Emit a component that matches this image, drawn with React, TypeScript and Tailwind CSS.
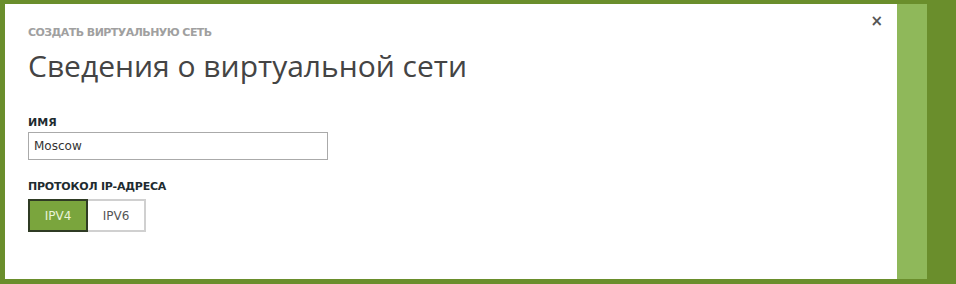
import React from "react";

export default function App() {
  return (
    <div className="w-[956px] h-[284px] bg-[#6a8e2c] flex pt-[4px] pl-[5px] pb-[5px] overflow-hidden">
      <div className="relative w-[892px] h-full bg-white pl-[23px] pt-[21px] font-['DejaVu_Sans',sans-serif]">
        {/* close */}
        <button className="absolute right-[14px] top-[10px] text-[15px] leading-none font-bold text-[#555]">
          ×
        </button>

        <div className="text-[11px] leading-[16px] font-bold text-[#a0a0a0] uppercase tracking-[-0.55px]">
          Создать виртуальную сеть
        </div>
        <h1 className="mt-[7px] text-[30px] leading-[36px] text-[#444] font-['Open_Sans',sans-serif]">
          Сведения о виртуальной сети
        </h1>

        <div className="mt-[32px] text-[11px] leading-[14px] font-bold text-[#1e2b30] uppercase">
          Имя
        </div>
        <div className="mt-[2px] w-[300px] h-[28px] border border-[#aaa] flex items-center px-[5px] text-[12px] text-[#333]">
          Moscow
        </div>

        <div className="mt-[20px] text-[11px] leading-[14px] font-bold text-[#1e2b30] uppercase tracking-[-0.2px]">
          Протокол IP-адреса
        </div>
        <div className="mt-[5px] flex">
          <button className="w-[60px] h-[33px] bg-[#7aa53d] border-2 border-[#2f3b24] text-[12px] text-[#eaf3d8]">
            IPV4
          </button>
          <button className="w-[58px] h-[33px] bg-white border-2 border-l-0 border-[#d0d0d0] text-[12px] text-[#555]">
            IPV6
          </button>
        </div>
      </div>
      <div className="w-[30px] h-full bg-[#8fb85a]" />
    </div>
  );
}
